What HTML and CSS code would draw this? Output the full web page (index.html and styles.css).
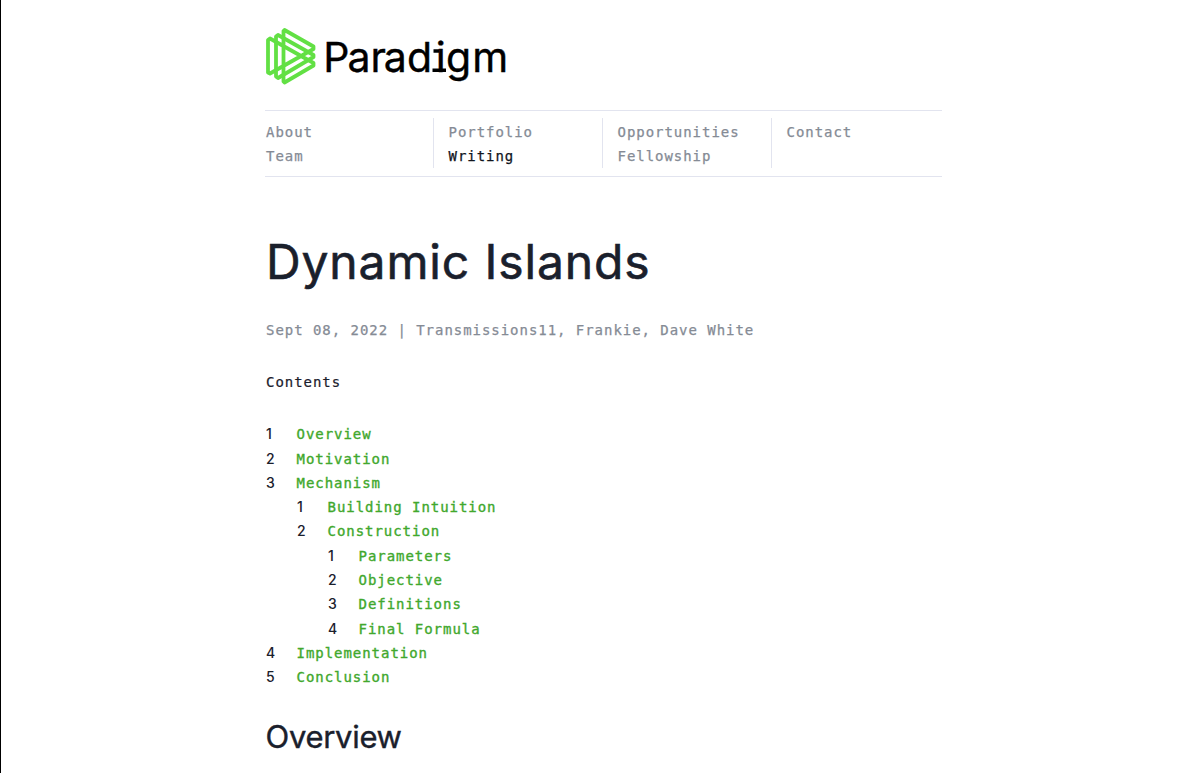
FILE: index.html
```html
<!DOCTYPE html>
<html lang="en">
<head>
<meta charset="utf-8">
<title>Dynamic Islands</title>
<link rel="stylesheet" href="styles.css">
</head>
<body>
<main class="page">
  <header>
    <a class="logo">
      <svg class="logo-svg" viewBox="0 0 250 60" width="250" height="60">
        <g class="mark">
          <path d="M3 13 L5 11.500 L48.500 36 V38.500 L19.500 55.500 L18.500 54.500 V4 L19.500 3 L48.500 19.500 V22 L5 46.500 L3 45.500 Z"/>
          <path d="M48.500 28 L13 8 L11 9.500 V49.500 L13 51 L48.500 30 Z"/>
        </g>
        <text class="wordmark" x="58.200 82.500 105.500 118.700 142 170.800 181 207.300" y="45">Paradigm</text>
        <path class="slab" d="M168.500 24H174M167.500 43.300H181"/>
      </svg>
    </a>
    <nav class="nav">
      <div class="nav-col"><a>About</a><a>Team</a></div>
      <div class="nav-col"><a>Portfolio</a><a class="active">Writing</a></div>
      <div class="nav-col"><a>Opportunities</a><a>Fellowship</a></div>
      <div class="nav-col"><a>Contact</a></div>
    </nav>
  </header>
  <article>
    <h1 class="title">Dynamic Islands</h1>
    <p class="byline">Sept 08, 2022 | Transmissions11, Frankie, Dave White</p>
    <p class="contents">Contents</p>
    <ol class="toc">
      <li><a>Overview</a></li>
      <li><a>Motivation</a></li>
      <li><a>Mechanism</a>
        <ol>
          <li><a>Building Intuition</a></li>
          <li><a>Construction</a>
            <ol>
              <li><a>Parameters</a></li>
              <li><a>Objective</a></li>
              <li><a>Definitions</a></li>
              <li><a>Final Formula</a></li>
            </ol>
          </li>
        </ol>
      </li>
      <li><a>Implementation</a></li>
      <li><a>Conclusion</a></li>
    </ol>
    <h2 class="section">Overview</h2>
  </article>
</main>
</body>
</html>
```
FILE: styles.css
```css
* { box-sizing: border-box; }
body {
  margin: 0;
  height: 773px;
  overflow: hidden;
  border-left: 1px solid #000;
  background: #fff;
  color: #1a202c;
  font: 14px/24.3px "DejaVu Sans Mono", monospace;
  letter-spacing: 0.96px;
}
.page { width: 677px; margin-left: 264px; padding-top: 27px; }
.logo { display: block; height: 83px; }
.logo-svg { display: block; }
.mark { fill: none; stroke: #62e044; stroke-width: 3.8; stroke-linejoin: round; stroke-linecap: round; }
.wordmark { font: 41px "Inter", sans-serif; letter-spacing: 0; fill: #000; stroke: #000; stroke-width: 0.4; }
.slab { stroke: #000; stroke-width: 3.5; fill: none; }
.nav {
  display: grid;
  grid-template-columns: repeat(4, 169px);
  height: 67px;
  padding: 7px 0 8px;
  border-top: 1px solid #e2e4ef;
  border-bottom: 1px solid #e2e4ef;
  color: #858b95;
  -webkit-text-stroke: 0.25px;
}
.nav-col { display: flex; flex-direction: column; padding: 2px 0 0 14.5px; height: 50px; border-left: 1px solid #e2e4ef; }
.nav-col:first-child { padding-left: 1px; border-left: 0; }
.nav-col:not(:first-child) { margin-left: -1px; }
.active { color: #12151d; }
.title {
  margin: 55px 0 0;
  padding-left: 1px;
  font: 400 48px/60px "Inter", sans-serif;
  letter-spacing: 0.87px;
  -webkit-text-stroke: 0.6px;
}
.byline { margin: 26px 0 0; padding-left: 1px; color: #858b95; -webkit-text-stroke: 0.25px; }
.contents { margin: 28px 0 0; padding-left: 1px; -webkit-text-stroke: 0.2px; }
.toc, .toc ol { margin: 0; padding: 0; list-style: none; counter-reset: item; }
.toc { margin-top: 27.7px; }
.toc li { counter-increment: item; padding-left: 31px; }
.toc li::before {
  content: counter(item);
  display: inline-block;
  width: 30.5px;
  margin-left: -31px;
  padding-left: 1px;
  font: 500 14px/20px "Inter", sans-serif;
  color: #1a202c;
  letter-spacing: 0;
}
.toc a { color: #41a82d; -webkit-text-stroke: 0.35px #41a82d; }
.section { margin: 27.5px 0 0; padding-left: 0.5px; font: 400 31px/40px "Inter", sans-serif; letter-spacing: -0.3px; -webkit-text-stroke: 0.4px; }
```
